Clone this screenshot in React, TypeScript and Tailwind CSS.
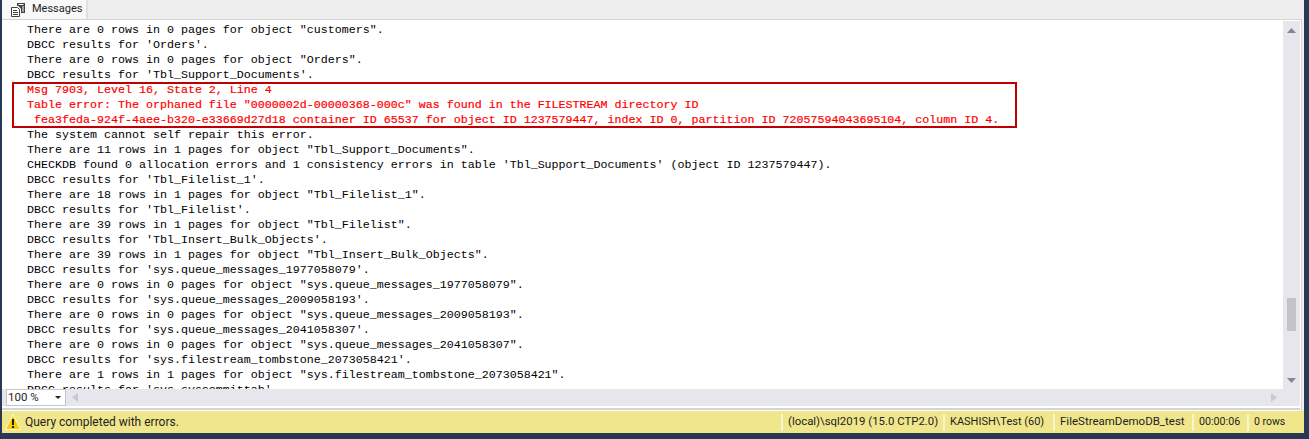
const lines: { t: string; red?: boolean }[] = [
  { t: 'There are 0 rows in 0 pages for object "customers".' },
  { t: "DBCC results for 'Orders'." },
  { t: 'There are 0 rows in 0 pages for object "Orders".' },
  { t: "DBCC results for 'Tbl_Support_Documents'." },
  { t: 'Msg 7903, Level 16, State 2, Line 4', red: true },
  { t: 'Table error: The orphaned file "0000002d-00000368-000c" was found in the FILESTREAM directory ID', red: true },
  { t: ' fea3feda-924f-4aee-b320-e33669d27d18 container ID 65537 for object ID 1237579447, index ID 0, partition ID 72057594043695104, column ID 4.', red: true },
  { t: 'The system cannot self repair this error.' },
  { t: 'There are 11 rows in 1 pages for object "Tbl_Support_Documents".' },
  { t: "CHECKDB found 0 allocation errors and 1 consistency errors in table 'Tbl_Support_Documents' (object ID 1237579447)." },
  { t: "DBCC results for 'Tbl_Filelist_1'." },
  { t: 'There are 18 rows in 1 pages for object "Tbl_Filelist_1".' },
  { t: "DBCC results for 'Tbl_Filelist'." },
  { t: 'There are 39 rows in 1 pages for object "Tbl_Filelist".' },
  { t: "DBCC results for 'Tbl_Insert_Bulk_Objects'." },
  { t: 'There are 39 rows in 1 pages for object "Tbl_Insert_Bulk_Objects".' },
  { t: "DBCC results for 'sys.queue_messages_1977058079'." },
  { t: 'There are 0 rows in 0 pages for object "sys.queue_messages_1977058079".' },
  { t: "DBCC results for 'sys.queue_messages_2009058193'." },
  { t: 'There are 0 rows in 0 pages for object "sys.queue_messages_2009058193".' },
  { t: "DBCC results for 'sys.queue_messages_2041058307'." },
  { t: 'There are 0 rows in 0 pages for object "sys.queue_messages_2041058307".' },
  { t: "DBCC results for 'sys.filestream_tombstone_2073058421'." },
  { t: 'There are 1 rows in 1 pages for object "sys.filestream_tombstone_2073058421".' },
  { t: "DBCC results for 'sys.syscommittab'." },
];

function StatusCell({ children, className }: { children: React.ReactNode; className: string }) {
  return (
    <div className={`flex h-[17px] items-center border-l-2 border-[#f7f4d2] pl-[5px] whitespace-nowrap ${className}`}>
      {children}
    </div>
  );
}

export default function App() {
  return (
    <div className="flex h-[439px] w-[1309px] flex-col overflow-hidden bg-[#293955] pl-[2px] pr-[5px] pb-[6px] font-['Roboto',sans-serif]">
      <div className="flex h-[19px] shrink-0 bg-[#eeeeee]">
        <div className="flex w-[86px] items-center gap-[6px] border-r-2 border-[#e0e0e0] bg-[#f8f8f8] pl-[9px] text-[11px] text-[#1e1e1e]">
          <svg width="15" height="14" viewBox="0 0 15 14" className="shrink-0">
            <path d="M0.5 4.5h6l2 2v7h-8z" fill="#fff" stroke="#424242" />
            <path d="M2 7.5h4M2 9.5h5M2 11.5h5" stroke="#424242" />
            <path d="M6 0h8v10h-4V6L7.5 3H6z" fill="#424242" />
            <path d="M7.5 1.5h5M11 4h2M11 6h2M11 8h2" stroke="#fff" />
          </svg>
          <span>Messages</span>
        </div>
      </div>
      <div className="flex min-h-0 flex-1 flex-col bg-[#f0f0f0] pr-[2px]">
        <div className="flex min-h-0 flex-1 flex-col border-t border-r border-[#d4d4d4] bg-white pr-px pt-px">
          <div className="flex min-h-0 flex-1">
            <div className="relative min-w-0 flex-1 overflow-hidden pl-[25px] pt-[2px] font-['Liberation_Mono',monospace] text-[11.67px] leading-[15px] text-black">
              {lines.map((l, i) => (
                <div key={i} className={`whitespace-pre ${l.red ? 'text-[#ff0000] [-webkit-text-stroke:0.2px_#ff0000]' : ''}`}>
                  {l.t}
                </div>
              ))}
              <div className="absolute top-[61px] left-[10px] h-[46px] w-[1005px] border-2 border-[#c00000]" />
            </div>
            <div className="flex w-[17px] shrink-0 flex-col items-center bg-[#e6e6ec]">
              <svg width="9" height="5" viewBox="0 0 9 5" className="mt-[7px]">
                <path d="M4.5 0L9 5H0z" fill="#84849c" />
              </svg>
              <div className="mt-[265px] h-[33px] w-[9px] bg-[#c2c3c9]" />
              <div className="flex-1" />
              <svg width="9" height="5" viewBox="0 0 9 5" className="mb-[6px]">
                <path d="M0 0h9L4.5 5z" fill="#84849c" />
              </svg>
            </div>
          </div>
          <div className="flex h-[17px] shrink-0 items-center bg-[#e6e6ec]">
            <div className="ml-[4px] flex h-[17px] w-[60px] items-center justify-between border border-[#c2c5d0] bg-white pl-[1px] pr-[4px] text-[11.5px] text-[#1e1e1e]">
              <span>100 %</span>
              <svg width="6" height="3" viewBox="0 0 6 3">
                <path d="M0 0h6L3 3z" fill="#1e1e1e" />
              </svg>
            </div>
            <svg width="6" height="9" viewBox="0 0 6 9" className="ml-[6px]">
              <path d="M6 0v9L0 4.5z" fill="#c8c9d0" />
            </svg>
            <div className="flex-1" />
            <svg width="6" height="9" viewBox="0 0 6 9" className="mr-[23px]">
              <path d="M0 0v9l6-4.5z" fill="#c8c9d0" />
            </svg>
          </div>
          <div className="mt-[2px] mb-px h-[2px] shrink-0 bg-[#d4d4d4]" />
        </div>
      </div>
      <div className="flex h-[22px] shrink-0 items-center bg-[#f0e68c] text-[12px] text-[#1e1e1e]">
        <svg width="16" height="16" viewBox="0 0 16 16" className="ml-[3px] shrink-0">
          <path d="M8 0.7L15.5 15.5H0.5z" fill="#ffcc00" stroke="#fff7d0" />
          <path d="M7 5h2v6H7zM7 12h2v2H7z" fill="#1e1e1e" />
        </svg>
        <span className="ml-[4px] flex-1 whitespace-nowrap">Query completed with errors.</span>
        <StatusCell className="w-[162px] text-[11.4px]">(local)\sql2019 (15.0 CTP2.0)</StatusCell>
        <StatusCell className="w-[110px] text-[11px]">KASHISH\Test (60)</StatusCell>
        <StatusCell className="w-[139px] text-[11.5px]">FileStreamDemoDB_test</StatusCell>
        <StatusCell className="w-[55px] text-[10.7px]">00:00:06</StatusCell>
        <StatusCell className="w-[57px] text-[10.5px]">0 rows</StatusCell>
      </div>
    </div>
  );
}
